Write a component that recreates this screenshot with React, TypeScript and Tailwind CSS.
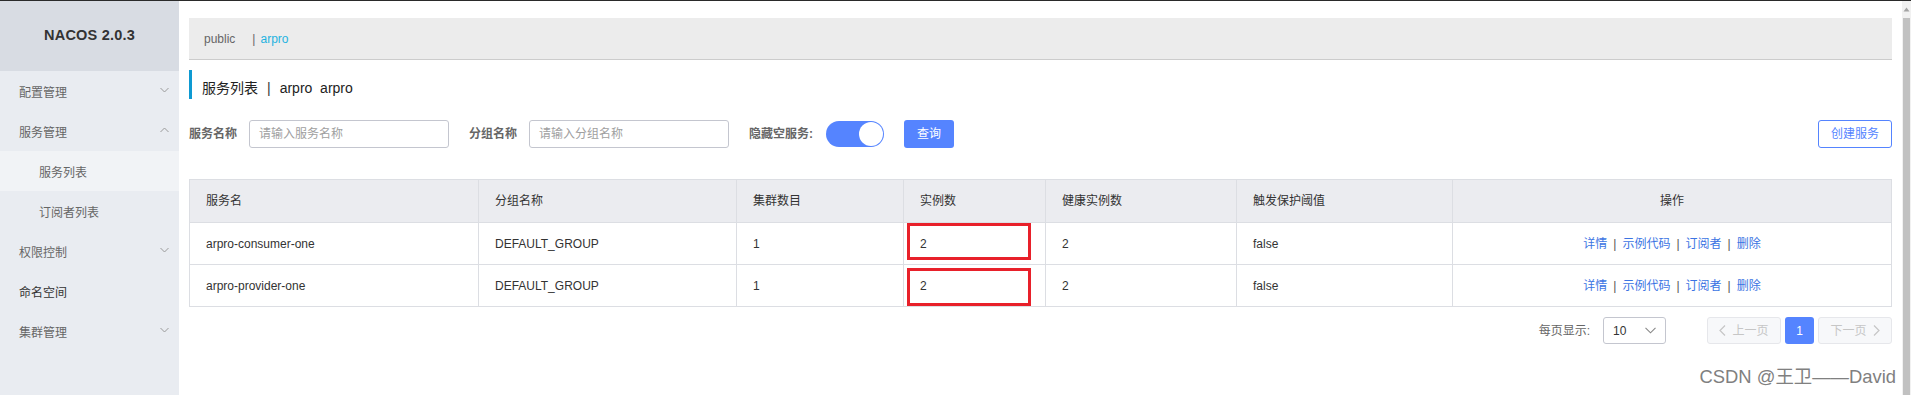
import React from "react";

const Chevron = ({ up = false }: { up?: boolean }) => (
  <svg width="9" height="6" viewBox="0 0 9 6" className="shrink-0">
    {up ? (
      <polyline points="0.5,5 4.5,1 8.5,5" fill="none" stroke="#9a9a9a" strokeWidth="1" />
    ) : (
      <polyline points="0.5,1 4.5,5 8.5,1" fill="none" stroke="#9a9a9a" strokeWidth="1" />
    )}
  </svg>
);

const SideItem = ({
  label,
  chevron,
  dark = false,
}: {
  label: string;
  chevron?: "up" | "down";
  dark?: boolean;
}) => (
  <div className="h-[40px] flex items-center pl-[19px] pr-[10px]">
    <span className={`text-[12px] pt-[3px] ${dark ? "text-[#333]" : "text-[#666]"}`}>{label}</span>
    {chevron && (
      <span className="ml-auto pb-[2px]">
        <Chevron up={chevron === "up"} />
      </span>
    )}
  </div>
);

const SubItem = ({ label, active = false }: { label: string; active?: boolean }) => (
  <div className={`h-[40px] flex items-center pl-[39px] ${active ? "bg-[#f1f3f6]" : ""}`}>
    <span className="text-[12px] text-[#666] pt-[3px]">{label}</span>
  </div>
);

const cols = [289, 258, 167, 142, 191, 216, 439];
const headers = ["服务名", "分组名称", "集群数目", "实例数", "健康实例数", "触发保护阈值", "操作"];
const rows = [
  ["arpro-consumer-one", "DEFAULT_GROUP", "1", "2", "2", "false"],
  ["arpro-provider-one", "DEFAULT_GROUP", "1", "2", "2", "false"],
];

const Ops = () => (
  <div className="flex items-center justify-center w-full text-[12px]">
    <span className="text-[#3b74e3]">详情</span>
    <span className="text-[#555] mx-[6px]">|</span>
    <span className="text-[#3b74e3]">示例代码</span>
    <span className="text-[#555] mx-[6px]">|</span>
    <span className="text-[#3b74e3]">订阅者</span>
    <span className="text-[#555] mx-[6px]">|</span>
    <span className="text-[#3b74e3]">删除</span>
  </div>
);

export default function App() {
  return (
    <div className="w-[1911px] h-[395px] flex flex-col bg-white relative overflow-hidden font-['Liberation_Sans','Noto_Sans_CJK_SC',sans-serif]">
      <div className="h-px bg-[#2a2a2a] shrink-0" />
      <div className="flex flex-1 min-h-0">
        {/* Sidebar */}
        <div className="w-[179px] shrink-0 bg-[#e9ecf1] flex flex-col">
          <div className="h-[70px] bg-[#d8dce3] flex items-center justify-center">
            <span className="text-[14.5px] font-bold text-[#333] tracking-[0.2px]">NACOS 2.0.3</span>
          </div>
          <SideItem label="配置管理" chevron="down" />
          <SideItem label="服务管理" chevron="up" />
          <SubItem label="服务列表" active />
          <SubItem label="订阅者列表" />
          <SideItem label="权限控制" chevron="down" />
          <SideItem label="命名空间" dark />
          <SideItem label="集群管理" chevron="down" />
        </div>

        {/* Main */}
        <div className="flex-1 min-w-0 px-[10px] pt-[17px] flex flex-col">
          <div className="h-[42px] bg-[#ececec] border-b border-[#cccccc] flex items-center pl-[15px] text-[12px]">
            <span className="text-[#666]">public</span>
            <span className="text-[#666] ml-[17px]">|</span>
            <span className="text-[#1fb3e0] ml-[5px]">arpro</span>
          </div>

          <div className="mt-[10px] flex items-start">
            <div className="w-[3px] h-[29px] bg-[#0e9ad2]" />
            <div className="pl-[10px] pt-[8px] leading-[20px] text-[14px] text-[#222] flex">
              <span>服务列表</span>
              <span className="mx-[9px] text-[#333]">|</span>
              <span>arpro&nbsp;&nbsp;arpro</span>
            </div>
          </div>

          <div className="mt-[21px] h-[28px] flex items-center">
            <span className="text-[12px] font-bold text-[#666]">服务名称</span>
            <div className="ml-[12px] w-[200px] h-[28px] border border-[#c4c6cf] rounded-[3px] flex items-center pl-[9px] text-[12px] text-[#a0a0a0]">
              请输入服务名称
            </div>
            <span className="ml-[20px] text-[12px] font-bold text-[#666]">分组名称</span>
            <div className="ml-[12px] w-[200px] h-[28px] border border-[#c4c6cf] rounded-[3px] flex items-center pl-[9px] text-[12px] text-[#a0a0a0]">
              请输入分组名称
            </div>
            <span className="ml-[20px] text-[12px] font-bold text-[#666]">隐藏空服务:</span>
            <div className="ml-[13px] w-[58px] h-[26px] rounded-full bg-[#5584ff] flex items-center justify-end pr-[1px]">
              <div className="w-[24px] h-[24px] rounded-full bg-white" />
            </div>
            <div className="ml-[20px] w-[50px] h-[28px] rounded-[3px] bg-[#5584ff] text-white text-[12px] flex items-center justify-center">
              查询
            </div>
            <div className="ml-auto w-[74px] h-[28px] rounded-[3px] border border-[#5584ff] text-[#5584ff] text-[12px] flex items-center justify-center">
              创建服务
            </div>
          </div>

          {/* Table */}
          <div className="mt-[31px] w-[1703px] border-l border-t border-[#dcdee3] text-[12px] text-[#333]">
            <div className="flex bg-[#ebecf0]">
              {headers.map((h, i) => (
                <div
                  key={h}
                  style={{ width: cols[i] }}
                  className={`shrink-0 h-[43px] border-r border-b border-[#dcdee3] flex items-center ${
                    i === 6 ? "justify-center" : "pl-[16px]"
                  }`}
                >
                  {h}
                </div>
              ))}
            </div>
            {rows.map((r, ri) => (
              <div key={ri} className="flex bg-white">
                {r.map((c, i) => (
                  <div
                    key={i}
                    style={{ width: cols[i] }}
                    className="shrink-0 relative h-[42px] border-r border-b border-[#dcdee3] flex items-center pl-[16px]"
                  >
                    {c}
                    {i === 3 && (
                      <div
                        className={`absolute left-[3px] w-[124px] border-[3px] border-[#e8202a] ${
                          ri === 0 ? "top-0 h-[37px]" : "top-[3px] h-[38px]"
                        }`}
                      />
                    )}
                  </div>
                ))}
                <div style={{ width: cols[6] }} className="shrink-0 h-[42px] border-r border-b border-[#dcdee3] flex items-center">
                  <Ops />
                </div>
              </div>
            ))}
          </div>

          {/* Pagination */}
          <div className="mt-[10px] h-[27px] flex items-center justify-end text-[12px]">
            <span className="text-[#666]">每页显示:</span>
            <div className="ml-[13px] w-[63px] h-[27px] border border-[#c4c6cf] rounded-[3px] flex items-center pl-[9px] pr-[9px] text-[#333]">
              <span>10</span>
              <svg width="11" height="7" viewBox="0 0 11 7" className="ml-auto">
                <polyline points="0.5,0.8 5.5,5.8 10.5,0.8" fill="none" stroke="#888" strokeWidth="1.1" />
              </svg>
            </div>
            <div className="ml-[41px] w-[74px] h-[27px] border border-[#e6e7eb] bg-[#f7f8fa] rounded-[3px] flex items-center justify-center text-[#c6c6c6]">
              <svg width="7" height="11" viewBox="0 0 7 11" className="mr-[6px]">
                <polyline points="6,0.5 1,5.5 6,10.5" fill="none" stroke="#c6c6c6" strokeWidth="1.2" />
              </svg>
              上一页
            </div>
            <div className="ml-[4px] w-[29px] h-[27px] bg-[#5584ff] rounded-[3px] flex items-center justify-center text-white">
              1
            </div>
            <div className="ml-[4px] w-[74px] h-[27px] border border-[#e6e7eb] bg-[#f7f8fa] rounded-[3px] flex items-center justify-center text-[#c6c6c6]">
              下一页
              <svg width="7" height="11" viewBox="0 0 7 11" className="ml-[6px]">
                <polyline points="1,0.5 6,5.5 1,10.5" fill="none" stroke="#c6c6c6" strokeWidth="1.2" />
              </svg>
            </div>
          </div>
        </div>

        {/* Scrollbar */}
        <div className="w-[9px] shrink-0 bg-[#f1f1f1] flex flex-col">
          <div className="h-[17px] flex items-center justify-center">
            <svg width="7" height="5" viewBox="0 0 7 5">
              <polygon points="3.5,0.5 6.5,4.5 0.5,4.5" fill="#a3a3a3" />
            </svg>
          </div>
          <div className="flex-1 mx-[1px] bg-[#c1c1c1]" />
        </div>
      </div>

      {/* Watermark */}
      <div className="absolute right-[15px] top-[365px] text-[18.4px] leading-[23px] text-[#808080]">
        CSDN @王卫——David
      </div>
    </div>
  );
}
